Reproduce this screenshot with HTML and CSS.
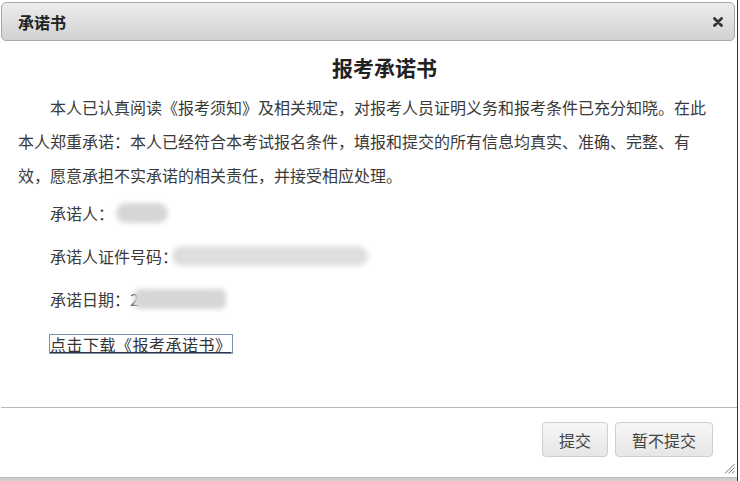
FILE: index.html
```html
<!DOCTYPE html>
<html lang="zh-CN">
<head>
<meta charset="utf-8">
<title>承诺书</title>
<link rel="stylesheet" href="styles.css">
</head>
<body>
<div class="dialog">
  <div class="titlebar">
    <span class="title">承诺书</span>
    <svg class="close" width="10" height="10" viewBox="0 0 10 10"><path d="M1.5 1.5 L8.5 8.5 M8.5 1.5 L1.5 8.5" stroke="#333" stroke-width="2.8" stroke-linecap="round"/></svg>
  </div>
  <div class="content">
    <h1 class="heading">报考承诺书</h1>
    <p class="para">本人已认真阅读《报考须知》及相关规定，对报考人员证明义务和报考条件已充分知晓。在此本人郑重承诺：本人已经符合本考试报名条件，填报和提交的所有信息均真实、准确、完整、有效，愿意承担不实承诺的相关责任，并接受相应处理。</p>
    <div class="fields">
      <div class="field">承诺人：<span class="blur blur-name"></span></div>
      <div class="field">承诺人证件号码：<span class="blur blur-id"></span></div>
      <div class="field">承诺日期：<span class="digit">2</span><span class="blur blur-date"></span></div>
      <div class="field"><a class="download" href="#">点击下载《报考承诺书》</a></div>
    </div>
  </div>
  <div class="footer">
    <button class="btn btn-submit">提交</button>
    <button class="btn btn-later">暂不提交</button>
    <svg class="grip" width="11" height="11" viewBox="0 0 11 11"><path d="M10.5 1 L1 10.5 M10.5 4.5 L4.5 10.5 M10.5 8 L8 10.5" stroke="#777" stroke-width="1"/></svg>
  </div>
  <div class="bottomband"></div>
</div>
</body>
</html>
```

FILE: styles.css
```css
* { box-sizing: border-box; }
html, body {
  margin: 0;
  padding: 0;
  background: #fff;
}
body {
  width: 740px;
  height: 481px;
  overflow: hidden;
  font-family: "Noto Sans CJK SC", "Microsoft YaHei", sans-serif;
  color: #3a3a3a;
}
.dialog {
  width: 738px;
  height: 481px;
  border-right: 1px solid #333;
  display: flex;
  flex-direction: column;
  position: relative;
  background: #fff;
}
.titlebar {
  margin: 2px 2px 0 1px;
  height: 39px;
  border: 1px solid #a9a9a9;
  border-radius: 5px;
  background: linear-gradient(#ececec, #d2d2d2);
  display: flex;
  align-items: center;
  justify-content: space-between;
  padding: 0 11px 0 16px;
  flex: none;
}
.title {
  font-size: 16px;
  font-weight: bold;
  color: #222;
  line-height: 20px;
}
.close { display: block; }
.content {
  flex: 1;
  padding: 0 26px 0 18px;
}
.heading {
  margin: 12px 0 0;
  font-size: 21px;
  line-height: 28px;
  font-weight: bold;
  text-align: center;
  color: #222;
  padding-left: 40px;
}
.para {
  margin: 9px 0 0;
  font-size: 16px;
  line-height: 34px;
  text-indent: 2em;
}
.fields {
  margin-top: 4px;
  padding-left: 32px;
  display: flex;
  flex-direction: column;
  gap: 9px;
}
.field {
  font-size: 16px;
  line-height: 34px;
  min-height: 34px;
  display: flex;
  align-items: center;
}
.blur {
  display: inline-block;
  height: 20px;
  background: #d6d6d6;
  border-radius: 10px;
  filter: blur(2.5px);
}
.blur-name { width: 52px; margin-left: 2px; }
.blur-id { width: 196px; margin-left: -6px; background: #dedede; }
.digit { color: #555; }
.blur-date { width: 92px; margin-left: -5px; border-radius: 6px; }
.download {
  color: #333;
  text-decoration: underline;
  outline: 1px solid #7b8fb8;
  outline-offset: 0;
  line-height: 18px;
  letter-spacing: 0.5px;
  margin-top: 4px;
}
.footer {
  flex: none;
  height: 70px;
  margin-left: 1px;
  border-top: 1px solid #b9b9b9;
  display: flex;
  justify-content: flex-end;
  align-items: flex-start;
  gap: 7px;
  padding: 14px 24px 0 0;
  position: relative;
}
.btn {
  height: 35px;
  border: 1px solid #cfcfcf;
  border-radius: 4px;
  background: linear-gradient(#f7f7f7, #e6e6e6);
  font-family: "Noto Sans CJK SC", "Microsoft YaHei", sans-serif;
  font-size: 16px;
  color: #444;
  padding: 0;
}
.btn-submit { width: 66px; }
.btn-later { width: 98px; }
.grip {
  position: absolute;
  right: 2px;
  bottom: 3px;
}
.bottomband {
  flex: none;
  height: 4px;
  background: #cfcfcf;
  border-top: 1px solid #bdbdbd;
}
```
